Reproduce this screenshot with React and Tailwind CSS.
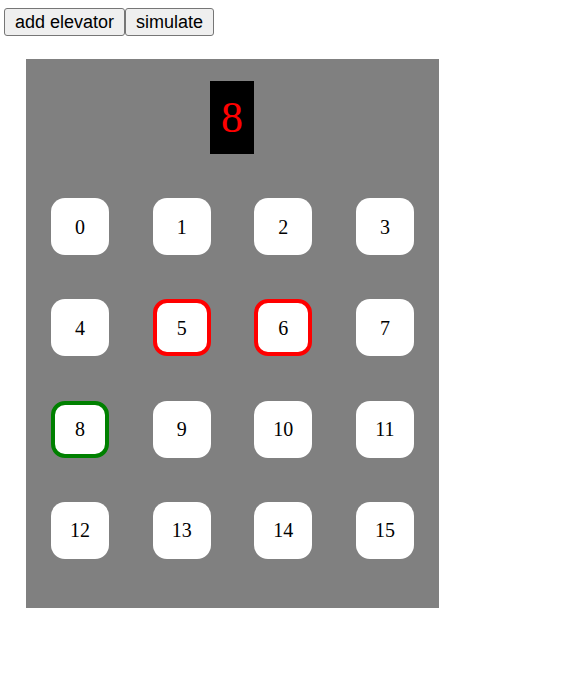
export default function App() {
  const floors = Array.from({ length: 16 }, (_, i) => i);
  const red = [5, 6];
  const green = [8];
  return (
    <div className="w-[573px] h-[676px] bg-white font-['Liberation_Serif',serif]">
      <div className="flex pl-[4px] pt-[8px]">
        <button className="h-[28px] px-[10px] bg-[#efefef] border border-[#767676] rounded-[3px] text-[18px] text-black leading-none font-['Liberation_Sans',Arial,sans-serif]">
          add elevator
        </button>
        <button className="h-[28px] px-[10px] bg-[#efefef] border border-[#767676] rounded-[3px] text-[18px] text-black leading-none font-['Liberation_Sans',Arial,sans-serif]">
          simulate
        </button>
      </div>
      <div className="ml-[26px] mt-[23px] w-[413px] h-[549px] bg-[#808080] px-[25px] pt-[22px]">
        <div className="flex justify-center pr-[1px]">
          <div className="w-[44px] h-[73px] bg-black text-[#ff0000] text-[44px] flex items-center justify-center leading-none font-['Liberation_Serif',serif]">
            8
          </div>
        </div>
        <div className="mt-[44px] grid grid-cols-[58px_58px_58px_58px] justify-between gap-y-[44.33px]">
          {floors.map((f) => (
            <div
              key={f}
              className={
                "w-[58px] h-[57px] bg-white rounded-[14px] flex items-center justify-center text-[20px] text-black " +
                (red.includes(f) ? "border-[4px] border-[#ff0000]" : green.includes(f) ? "border-[4px] border-[#008000]" : "")
              }
            >
              {f}
            </div>
          ))}
        </div>
      </div>
    </div>
  );
}
